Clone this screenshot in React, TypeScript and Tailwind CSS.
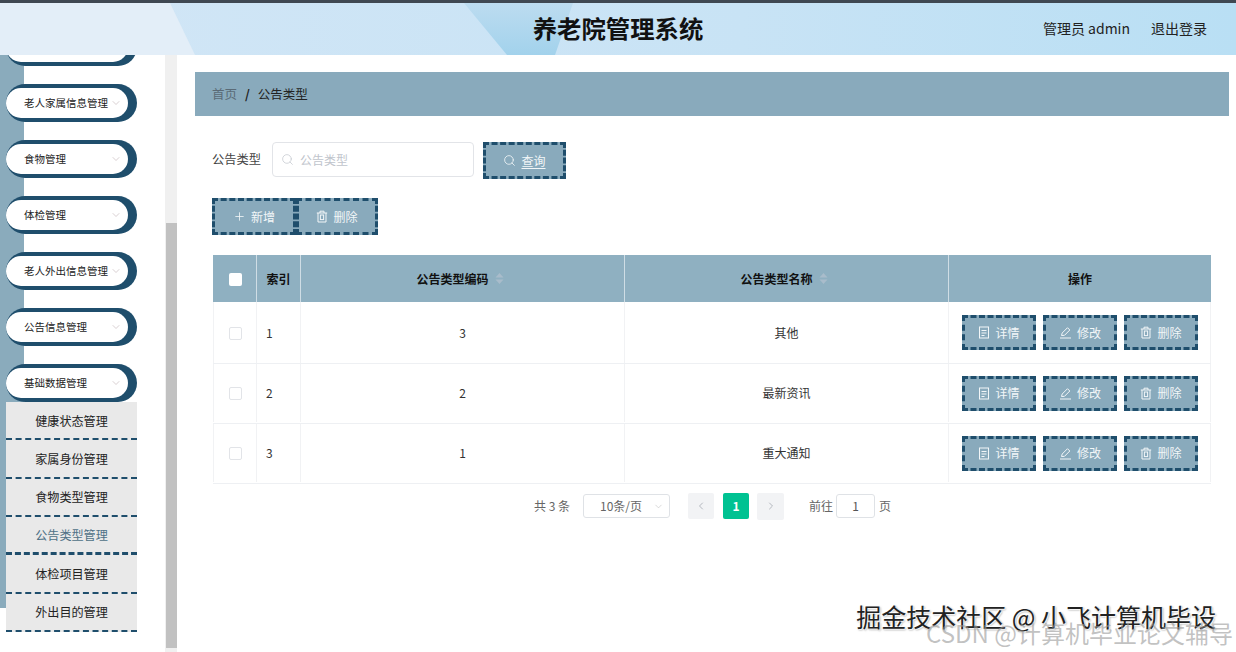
import React from "react";
import { Search, Plus, ChevronDown, ChevronLeft, ChevronRight } from "lucide-react";

const font = "font-['Noto_Sans_CJK_SC','Noto_Sans',sans-serif]";

function DocIcon() {
  return (
    <svg width="12" height="13" viewBox="0 0 12 13" fill="none" stroke="currentColor" strokeWidth="1">
      <rect x="1.5" y="1" width="9" height="11" />
      <path d="M3.5 4.5h5M3.5 7h5M3.5 9.5h3" />
    </svg>
  );
}

function EditIcon() {
  return (
    <svg width="13" height="13" viewBox="0 0 13 13" fill="none" stroke="currentColor" strokeWidth="1">
      <path d="M2.5 9.5L3.2 7L8.5 1.7L10.8 4L5.5 9.3L2.5 9.5Z" />
      <path d="M1 12h11" />
    </svg>
  );
}

function BinIcon() {
  return (
    <svg width="12" height="13" viewBox="0 0 12 13" fill="none" stroke="currentColor" strokeWidth="1">
      <path d="M.8 3h10.4M4 3V1.2h4V3M2 3v9h8V3" />
      <rect x="4.4" y="5" width="3.2" height="4.6" />
    </svg>
  );
}

function Pill({ label }: { label: string }) {
  return (
    <div className="h-[38px] w-[131px] shrink-0 rounded-[19px] border-y-[4px] border-r-[9px] border-l-0 border-[#1f4e6c] bg-[#1f4e6c]">
      <div className="flex h-full items-center rounded-[15px] bg-white pl-[18px] pr-[6px] text-[10.5px] text-[#222]">
        <span className="flex-1 whitespace-nowrap">{label}</span>
        <ChevronDown size={12} strokeWidth={1.1} className="text-[#b9a9ad]" />
      </div>
    </div>
  );
}

function DashBtn({ children, className = "" }: { children: React.ReactNode; className?: string }) {
  return (
    <div className={`flex items-center justify-center gap-[5px] border-[3px] border-dashed border-[#1f4e6c] bg-[#89aabc] text-[12px] leading-none text-[#f2f6f8] ${className}`}>
      {children}
    </div>
  );
}

function Sort() {
  return (
    <svg width="9" height="13" viewBox="0 0 9 13" className="ml-[6px] mr-[5px]">
      <path d="M4.5 1L8.5 5.5H.5z" fill="#a9bccb" />
      <path d="M4.5 12L8.5 7.5H.5z" fill="#a9bccb" />
    </svg>
  );
}

const menu = ["健康状态管理", "家属身份管理", "食物类型管理", "公告类型管理", "体检项目管理", "外出目的管理"];
const rows = [
  ["1", "3", "其他"],
  ["2", "2", "最新资讯"],
  ["3", "1", "重大通知"],
];

export default function App() {
  return (
    <div className={`relative flex h-[652px] w-[1236px] flex-col overflow-hidden bg-white ${font}`}>
      <header className="relative flex h-[55px] shrink-0 items-center justify-center overflow-hidden border-t-[3px] border-[#3f4852] bg-[linear-gradient(90deg,#d2e6f6,#c8e3f5_60%,#b9dff4)]">
        <svg className="absolute inset-0" width="1236" height="52" viewBox="0 0 1236 52">
          <defs>
            <linearGradient id="hp" x1="0" y1="0" x2="0" y2="1">
              <stop offset="0" stopColor="#bcdcf0" />
              <stop offset="1" stopColor="#a2d2ec" />
            </linearGradient>
          </defs>
          <polygon points="0,0 170,0 195,52 0,52" fill="#e3eef8" />
          <polygon points="464,0 573,0 555,52 507,52" fill="url(#hp)" />
        </svg>
        <h1 className="relative pb-[1px] text-[24.4px] font-bold leading-none text-[#111]">养老院管理系统</h1>
        <div className="absolute right-[29px] top-0 flex h-full items-center gap-[21px] pb-[2px] text-[14px] text-[#222]">
          <span>管理员 admin</span>
          <span>退出登录</span>
        </div>
      </header>

      <div className="flex min-h-0 flex-1">
        <aside className="flex w-[177px] shrink-0">
          <nav className="flex h-full w-[165px] flex-col overflow-hidden bg-[linear-gradient(#8aabbc,#8aabbc)] bg-[length:24px_553px] bg-no-repeat pl-[6px]">
            <div className="mt-[-26.8px] flex flex-col gap-[17.9px]">
              <Pill label="" />
              <Pill label="老人家属信息管理" />
              <Pill label="食物管理" />
              <Pill label="体检管理" />
              <Pill label="老人外出信息管理" />
              <Pill label="公告信息管理" />
              <Pill label="基础数据管理" />
            </div>
            <div className="mt-[0.5px] flex w-[131px] flex-col">
              {menu.map((m, i) => (
                <div
                  key={m}
                  className={`flex h-[38.3px] items-center justify-center bg-[#e9e9e9] pt-[1px] text-[12.1px] ${i === 3 ? "border-b-[3px] text-[#4f7186]" : "border-b-2 text-[#222]"} border-dashed border-[#1f4e6c]`}
                >
                  {m}
                </div>
              ))}
            </div>
          </nav>
          <div className="flex h-full w-[12px] flex-col bg-[#f0f0f0] pb-[4px] pl-[1px] pt-[168px]">
            <div className="flex-1 bg-[#c1c1c1]" />
          </div>
        </aside>

        <main className="min-w-0 flex-1 pl-[18px] pr-[7px] pt-[17px]">
          <div className="flex h-[44px] items-center gap-[8px] bg-[#89aabc] pl-[17px] text-[12.5px]">
            <span className="text-[#5a6a76]">首页</span>
            <span className="font-bold text-[#222]">/</span>
            <span className="text-[#222]">公告类型</span>
          </div>

          <div className="ml-[17px] mr-[18px]">
            <div className="mt-[26px] flex items-start">
              <span className="mt-[8px] w-[60px] text-[12.25px] leading-[18px] text-[#444]">公告类型</span>
              <div className="flex h-[35px] w-[202px] items-center gap-[6px] rounded-[4px] border border-[#e2e4e8] pl-[8px] text-[12px] text-[#c0c4cc]">
                <Search size={13} strokeWidth={1.3} />
                <span>公告类型</span>
              </div>
              <DashBtn className="ml-[9px] h-[37px] w-[83px]">
                <Search size={13} strokeWidth={1.5} />
                <span className="underline underline-offset-2">查询</span>
              </DashBtn>
            </div>

            <div className="mt-[19px] flex">
              <DashBtn className="h-[37px] w-[84px]">
                <Plus size={13} strokeWidth={1.5} />
                <span>新增</span>
              </DashBtn>
              <DashBtn className="h-[37px] w-[82px]">
                <BinIcon />
                <span>删除</span>
              </DashBtn>
            </div>

            <div className="ml-[1px] mt-[20px] w-[998px] text-[12px] text-[#333]">
              <div className="flex h-[47px] bg-[#8fb0c1] font-bold text-[#111]">
                <div className="flex w-[44px] items-center justify-center border-r border-[#cfdde5]">
                  <span className="ml-[1px] mt-[1px] size-[13px] rounded-[2px] bg-white" />
                </div>
                <div className="flex w-[44px] items-center justify-center border-r border-[#cfdde5]">索引</div>
                <div className="flex w-[324px] items-center justify-center border-r border-[#cfdde5]">公告类型编码<Sort /></div>
                <div className="flex w-[324px] items-center justify-center border-r border-[#cfdde5]">公告类型名称<Sort /></div>
                <div className="flex flex-1 items-center justify-center">操作</div>
              </div>
              {rows.map((r, i) => (
                <div key={r[0]} className={`flex border-b border-[#eef0f3] ${i === 0 ? "h-[62px]" : "h-[60px] pb-[1px]"}`}>
                  <div className="flex w-[44px] items-center justify-center border-l border-r border-[#f1f2f4]">
                    <span className="mt-[1px] size-[13px] rounded-[2px] border border-[#e2e4e8]" />
                  </div>
                  <div className="flex w-[44px] items-center border-r border-[#f1f2f4] pl-[9px]">{r[0]}</div>
                  <div className="flex w-[324px] items-center justify-center border-r border-[#f1f2f4]">{r[1]}</div>
                  <div className="flex w-[324px] items-center justify-center border-r border-[#f1f2f4]">{r[2]}</div>
                  <div className="flex flex-1 items-center gap-[7px] border-r border-[#f1f2f4] pl-[13px]">
                    <DashBtn className="h-[35px] w-[74px]"><DocIcon /><span>详情</span></DashBtn>
                    <DashBtn className="h-[35px] w-[74px]"><EditIcon /><span>修改</span></DashBtn>
                    <DashBtn className="h-[35px] w-[74px]"><BinIcon /><span>删除</span></DashBtn>
                  </div>
                </div>
              ))}
            </div>

            <div className="ml-[322px] mt-[10px] flex h-[24px] items-center text-[12px] text-[#666]">
              <span className="w-[49px]">共 3 条</span>
              <div className="flex h-[24px] w-[87px] items-center rounded-[3px] border border-[#dfe2e6] pl-[16px] pr-[5px]">
                <span className="flex-1">10条/页</span>
                <ChevronDown size={11} strokeWidth={1.2} className="text-[#bbb]" />
              </div>
              <div className="ml-[18px] flex size-[26px] items-center justify-center rounded-[2px] bg-[#f2f3f5] text-[#b4b8bf]"><ChevronLeft size={12} /></div>
              <div className="ml-[9px] flex size-[26px] items-center justify-center rounded-[2px] bg-[#00c292] font-bold text-white">1</div>
              <div className="ml-[8px] flex size-[27px] items-center justify-center rounded-[2px] bg-[#f2f3f5] text-[#b4b8bf]"><ChevronRight size={12} /></div>
              <span className="ml-[25px]">前往</span>
              <div className="ml-[3px] flex h-[24px] w-[39px] items-center justify-center rounded-[3px] border border-[#dfe2e6] text-[#555]">1</div>
              <span className="ml-[4px]">页</span>
            </div>
          </div>
        </main>
      </div>

      <div className="absolute bottom-[23px] right-[20px] whitespace-nowrap text-[25px] leading-none text-[#222] [text-shadow:1px_1px_1px_#fff,-1px_-1px_1px_#fff,1px_1px_2px_#777]">
        掘金技术社区 @ 小飞计算机毕设
      </div>
      <div className="absolute bottom-[7px] right-[3px] whitespace-nowrap text-[24px] leading-none text-[#999]/60">
        CSDN @计算机毕业论文辅导
      </div>
    </div>
  );
}
